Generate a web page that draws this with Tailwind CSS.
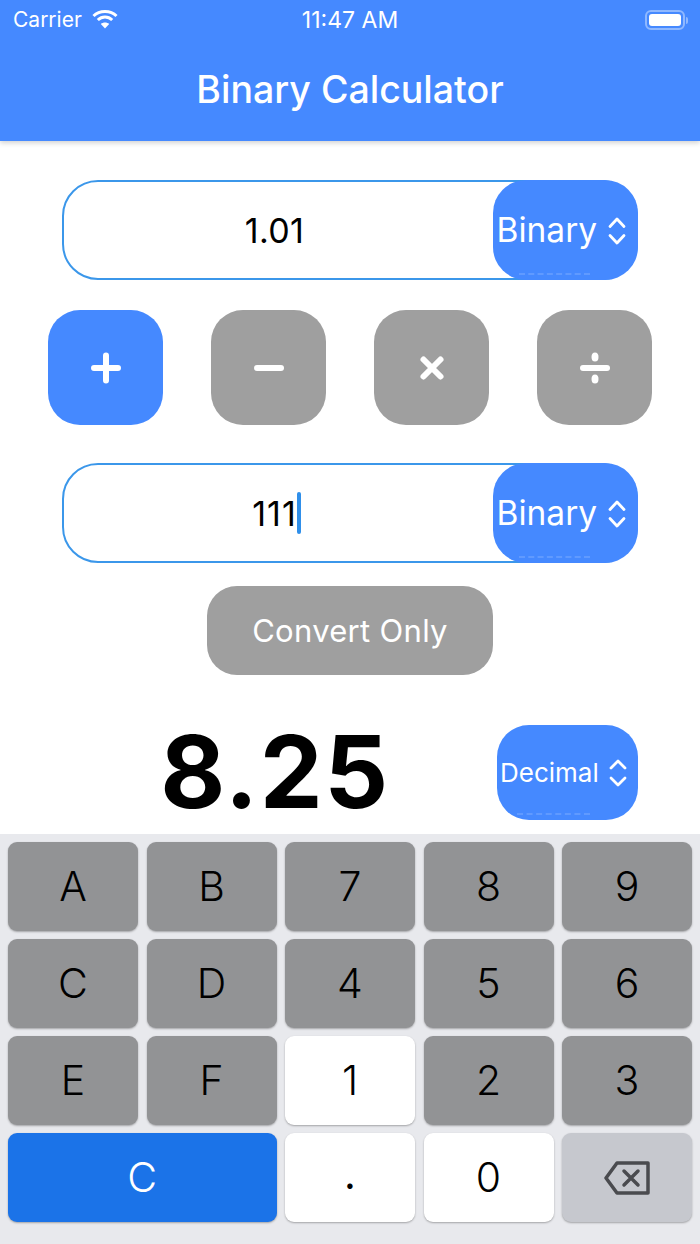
<!DOCTYPE html>
<html lang="en">
<head>
  <meta charset="UTF-8" />
  <title>Binary Calculator</title>
  <script src="https://cdn.jsdelivr.net/npm/@tailwindcss/browser@4"></script>
</head>
<body class="w-[700px] h-[1244px] overflow-hidden bg-white font-['Inter','Liberation_Sans',sans-serif] flex flex-col">
  <!-- header -->
  <header class="h-[141px] bg-[#4589ff] text-white shadow-[0_2px_5px_rgba(0,0,0,0.18)] relative z-10 shrink-0">
    <div class="h-[40px] pl-[13px] pr-[12px] flex items-center justify-between relative text-[21px]">
      <div class="flex items-center gap-[10px]">
        <span class="font-normal">Carrier</span>
        <svg width="28" height="20" viewBox="0 0 26 20" fill="none" stroke="white" stroke-width="3" class="-mt-[2px] -ml-[1px]">
          <path d="M1.5 7 C7.5 1 18.5 1 24.5 7" />
          <path d="M5.8 11 C10 7 16 7 20.2 11" />
          <path d="M13 19.5 L8.8 15 C11 13 15 13 17.2 15 Z" fill="white" stroke="none" />
        </svg>
      </div>
      <span class="absolute left-0 right-0 text-center text-[23px]">11:47 AM</span>
      <div class="flex items-center gap-[1px]">
        <div class="w-[40px] h-[20px] rounded-[6px] border-2 border-white/40 p-[2px]"><div class="w-full h-full bg-white rounded-[3px]"></div></div>
        <div class="w-[2px] h-[7px] bg-white/40 rounded-r"></div>
      </div>
    </div>
    <h1 class="mt-[28px] text-center text-[37.5px] leading-[44px] font-medium">Binary Calculator</h1>
  </header>

  <main class="flex-1 flex flex-col">
    <!-- first number -->
    <div class="mt-[39px] mx-[62px] h-[100px] border-[2.5px] border-[#3b97ea] rounded-[36px] relative shrink-0">
      <div class="w-[421px] h-full flex items-center justify-center text-[34px] tracking-[0.4px] text-black">1.01</div>
      <div class="absolute right-[-1.5px] top-[-2.5px] w-[145px] h-[100px] pt-[2px] bg-[#4589ff] rounded-[33px] flex items-center text-white text-[33.5px] pl-[4px] gap-[11px]">
        <span>Binary</span>
        <svg width="18" height="30" viewBox="0 0 18 30" fill="none" stroke="white" stroke-width="2.8" stroke-linecap="round" stroke-linejoin="round"><path d="M2 10.5 L9 3 L16 10.5" /><path d="M2 19.5 L9 27 L16 19.5" /></svg>
        <div class="absolute left-[26px] right-[48px] bottom-[5px] border-b-2 border-dashed border-white/15"></div>
      </div>
    </div>

    <!-- operators -->
    <div class="mt-[30px] mx-[48px] flex justify-between shrink-0">
      <div class="w-[115px] h-[115px] rounded-[32px] bg-[#4589ff] flex items-center justify-center">
        <svg width="32" height="32" viewBox="0 0 32 32" stroke="white" stroke-width="6" stroke-linecap="round"><path d="M16 3.5V28.5M4 16H28" /></svg>
      </div>
      <div class="w-[115px] h-[115px] rounded-[32px] bg-[#9f9f9f] flex items-center justify-center">
        <svg width="32" height="32" viewBox="0 0 32 32" stroke="white" stroke-width="6" stroke-linecap="round"><path d="M4 16H28" /></svg>
      </div>
      <div class="w-[115px] h-[115px] rounded-[32px] bg-[#9f9f9f] flex items-center justify-center">
        <svg width="32" height="32" viewBox="0 0 32 32" stroke="white" stroke-width="6" stroke-linecap="round"><path d="M7.5 7.5L24.5 24.5M24.5 7.5L7.5 24.5" /></svg>
      </div>
      <div class="w-[115px] h-[115px] rounded-[32px] bg-[#9f9f9f] flex items-center justify-center">
        <svg width="32" height="32" viewBox="0 0 32 32" fill="white" stroke="white" stroke-width="6" stroke-linecap="round"><path d="M4 16H28" /><ellipse cx="16" cy="5" rx="3.5" ry="4.5" stroke="none" /><ellipse cx="16" cy="27" rx="3.5" ry="4.5" stroke="none" /></svg>
      </div>
    </div>

    <!-- second number -->
    <div class="mt-[38px] mx-[62px] h-[100px] border-[2.5px] border-[#3b97ea] rounded-[36px] relative shrink-0">
      <div class="w-[425px] h-full flex items-center justify-center text-[34px] tracking-[1px] text-black">
        <span>111</span><span class="w-[4px] h-[42px] bg-[#2f8fea] rounded-full"></span>
      </div>
      <div class="absolute right-[-1.5px] top-[-2.5px] w-[145px] h-[100px] pt-[2px] bg-[#4589ff] rounded-[33px] flex items-center text-white text-[33.5px] pl-[4px] gap-[11px]">
        <span>Binary</span>
        <svg width="18" height="30" viewBox="0 0 18 30" fill="none" stroke="white" stroke-width="2.8" stroke-linecap="round" stroke-linejoin="round"><path d="M2 10.5 L9 3 L16 10.5" /><path d="M2 19.5 L9 27 L16 19.5" /></svg>
        <div class="absolute left-[26px] right-[48px] bottom-[5px] border-b-2 border-dashed border-white/15"></div>
      </div>
    </div>

    <!-- convert -->
    <div class="mt-[23px] mx-auto w-[286px] h-[89px] pt-[2px] rounded-[30px] bg-[#9f9f9f] text-white text-[31px] tracking-[0.3px] flex items-center justify-center shrink-0">Convert Only</div>

    <!-- result -->
    <div class="mt-[50px] mx-[62px] h-[95px] flex items-center shrink-0">
      <div class="w-[426px] mr-[9px] pb-[1px] text-center text-[100px] tracking-[1.5px] leading-none font-bold text-black">8.25</div>
      <div class="w-[141px] h-[95px] rounded-[32px] bg-[#4589ff] text-white text-[26px] flex items-center pl-[3px] gap-[10px] relative">
        <span>Decimal</span>
        <svg width="18" height="32" viewBox="0 0 18 32" fill="none" stroke="white" stroke-width="2.8" stroke-linecap="round" stroke-linejoin="round"><path d="M2 11 L9 4 L16 11" /><path d="M2 21 L9 28 L16 21" /></svg>
        <div class="absolute left-[20px] right-[48px] bottom-[5px] border-b-2 border-dashed border-white/15"></div>
      </div>
    </div>

    <!-- keyboard -->
    <div class="mt-[14px] flex-1 bg-[#e8e9ed] px-[8px] pt-[8px] grid grid-cols-5 gap-x-[8.5px] gap-y-[8px] grid-rows-[89px_89px_89px_89px] content-start text-[41px] font-[350] text-black">
      <div class="rounded-[9px] bg-[#929395] shadow-[0_1px_2px_rgba(0,0,0,0.3)] flex items-center justify-center">A</div>
      <div class="rounded-[9px] bg-[#929395] shadow-[0_1px_2px_rgba(0,0,0,0.3)] flex items-center justify-center">B</div>
      <div class="rounded-[9px] bg-[#929395] shadow-[0_1px_2px_rgba(0,0,0,0.3)] flex items-center justify-center">7</div>
      <div class="rounded-[9px] bg-[#929395] shadow-[0_1px_2px_rgba(0,0,0,0.3)] flex items-center justify-center">8</div>
      <div class="rounded-[9px] bg-[#929395] shadow-[0_1px_2px_rgba(0,0,0,0.3)] flex items-center justify-center">9</div>
      <div class="rounded-[9px] bg-[#929395] shadow-[0_1px_2px_rgba(0,0,0,0.3)] flex items-center justify-center">C</div>
      <div class="rounded-[9px] bg-[#929395] shadow-[0_1px_2px_rgba(0,0,0,0.3)] flex items-center justify-center">D</div>
      <div class="rounded-[9px] bg-[#929395] shadow-[0_1px_2px_rgba(0,0,0,0.3)] flex items-center justify-center">4</div>
      <div class="rounded-[9px] bg-[#929395] shadow-[0_1px_2px_rgba(0,0,0,0.3)] flex items-center justify-center">5</div>
      <div class="rounded-[9px] bg-[#929395] shadow-[0_1px_2px_rgba(0,0,0,0.3)] flex items-center justify-center">6</div>
      <div class="rounded-[9px] bg-[#929395] shadow-[0_1px_2px_rgba(0,0,0,0.3)] flex items-center justify-center">E</div>
      <div class="rounded-[9px] bg-[#929395] shadow-[0_1px_2px_rgba(0,0,0,0.3)] flex items-center justify-center">F</div>
      <div class="rounded-[9px] bg-white shadow-[0_1px_2px_rgba(0,0,0,0.3)] flex items-center justify-center">1</div>
      <div class="rounded-[9px] bg-[#929395] shadow-[0_1px_2px_rgba(0,0,0,0.3)] flex items-center justify-center">2</div>
      <div class="rounded-[9px] bg-[#929395] shadow-[0_1px_2px_rgba(0,0,0,0.3)] flex items-center justify-center">3</div>
      <div class="col-span-2 rounded-[9px] bg-[#1b73e8] text-white shadow-[0_1px_2px_rgba(0,0,0,0.3)] flex items-center justify-center">C</div>
      <div class="rounded-[9px] bg-white shadow-[0_1px_2px_rgba(0,0,0,0.3)] flex items-center justify-center pb-[6px] font-normal">.</div>
      <div class="rounded-[9px] bg-white shadow-[0_1px_2px_rgba(0,0,0,0.3)] flex items-center justify-center">0</div>
      <div class="rounded-[9px] bg-[#c6c8ce] shadow-[0_1px_2px_rgba(0,0,0,0.3)] flex items-center justify-center">
        <svg width="46" height="34" viewBox="0 0 46 34" fill="none" stroke="#4a4b4f" stroke-width="3.5" stroke-linejoin="round" stroke-linecap="round"><path d="M13 2 H44 V32 H13 L2 17 Z" /><path d="M20 10 L34 24 M34 10 L20 24" /></svg>
      </div>
    </div>
  </main>
</body>
</html>
